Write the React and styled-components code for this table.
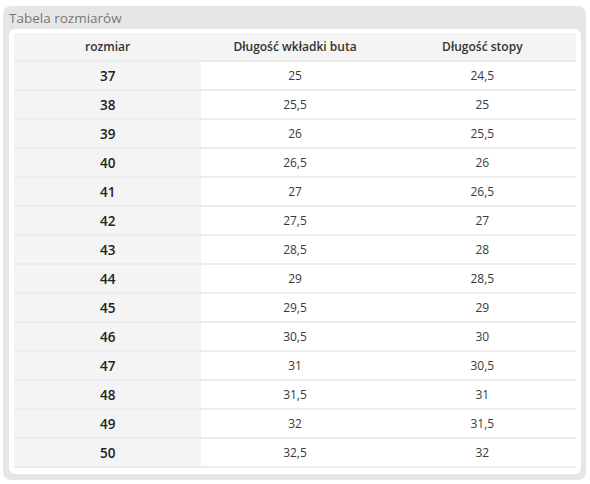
import styled, { createGlobalStyle } from 'styled-components';

const GlobalStyle = createGlobalStyle`
    body {
        margin: 0;
        background: #ffffff;
        font-family: 'Open Sans', 'Noto Sans', sans-serif;
    }
`;

const Panel = styled.section`
    box-sizing: border-box;
    width: 583px;
    height: 474px;
    margin: 6px 0 0 3px;
    padding: 0 5px 6px 6px;
    background: #e6e6e6;
    border-radius: 8px;
    display: flex;
    flex-direction: column;
`;

const PanelTitle = styled.h3`
    margin: 0;
    height: 23px;
    line-height: 24px;
    font-size: 13.5px;
    font-weight: 400;
    color: #777777;
`;

const Card = styled.div`
    flex: 1;
    background: #ffffff;
    border-radius: 6px;
    padding: 4px 5px 6px 5px;
`;

const Table = styled.table`
    width: 562px;
    border-collapse: collapse;
    table-layout: fixed;
`;

const Row = styled.tr`
    border-bottom: 2px solid #ececec;
`;

const HeadCell = styled.th`
    height: 27px;
    padding: 0;
    background: #f4f4f4;
    font-size: 12px;
    font-weight: 600;
    color: #333333;
    text-align: center;
`;

const Cell = styled.td`
    height: 27px;
    padding: 0;
    text-align: center;
    background: ${(props) => (props.$size ? '#f4f4f4' : '#ffffff')};
    font-size: ${(props) => (props.$size ? '13.5px' : '12px')};
    font-weight: ${(props) => (props.$size ? 600 : 400)};
    color: ${(props) => (props.$size ? '#222222' : '#3a3a3a')};
`;

const sizes = [
    ['37', '25', '24,5'],
    ['38', '25,5', '25'],
    ['39', '26', '25,5'],
    ['40', '26,5', '26'],
    ['41', '27', '26,5'],
    ['42', '27,5', '27'],
    ['43', '28,5', '28'],
    ['44', '29', '28,5'],
    ['45', '29,5', '29'],
    ['46', '30,5', '30'],
    ['47', '31', '30,5'],
    ['48', '31,5', '31'],
    ['49', '32', '31,5'],
    ['50', '32,5', '32'],
];

function App() {
    return (
        <>
            <GlobalStyle />
            <Panel>
                <PanelTitle>Tabela rozmiarów</PanelTitle>
                <Card>
                    <Table>
                        <thead>
                            <Row>
                                <HeadCell>rozmiar</HeadCell>
                                <HeadCell>Długość wkładki buta</HeadCell>
                                <HeadCell>Długość stopy</HeadCell>
                            </Row>
                        </thead>
                        <tbody>
                            {sizes.map(([size, insole, foot]) => (
                                <Row key={size}>
                                    <Cell $size>{size}</Cell>
                                    <Cell>{insole}</Cell>
                                    <Cell>{foot}</Cell>
                                </Row>
                            ))}
                        </tbody>
                    </Table>
                </Card>
            </Panel>
        </>
    );
}

export default App;
